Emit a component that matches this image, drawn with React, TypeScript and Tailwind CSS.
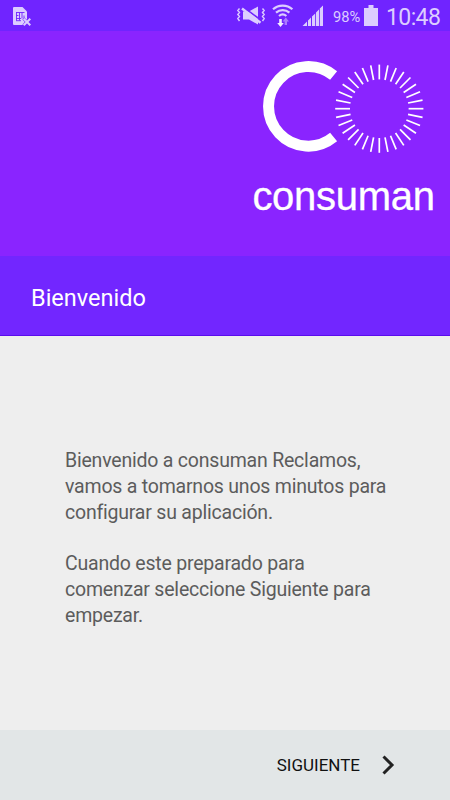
const TICKS = Array.from({ length: 32 }, (_, i) => i * 11.25);

function SimIcon() {
  return (
    <svg width="20" height="21" viewBox="12 6 20 21" fill="none">
      <path d="M14 7h8.500l4.500 4.500V19l-4 6h-9a1 1 0 0 1-1-1V8a1 1 0 0 1 1-1Z" fill="#dccdff" />
      <path d="M16 12.500h8.500M16 15.500h2.500M16 18.500h5M16 20.700h5M16.500 12.500v8M19.500 12.500v8M22 12.500v6M24 15.500v3" stroke="#7024ff" strokeWidth="0.900" />
      <path d="M23.400 18.600l7 7M30.400 18.600l-7 7" stroke="#7024ff" strokeWidth="2.800" />
      <path d="M23.700 18.700l6.600 6.600M30.300 18.700l-6.600 6.600" stroke="#dccdff" strokeWidth="2" />
    </svg>
  );
}

function MuteIcon() {
  return (
    <svg width="30" height="21" viewBox="236 5 30 21" fill="none">
      <path d="M243 11.500h6l9-5v18l-9-5h-6Z" fill="#dccdff" />
      <path d="M243 7l18.500 13.500" stroke="#7024ff" strokeWidth="1.600" />
      <path d="M242 8.500l18.500 14.300" stroke="#dccdff" strokeWidth="2.400" />
      <path
        d="M239.500 8.500l-1.700 2 1.700 2-1.700 2 1.700 2-1.700 2 1.700 2.500M262.500 8.500l1.700 2-1.700 2 1.700 2-1.700 2 1.700 2-1.700 2.500"
        stroke="#dccdff"
        strokeWidth="1.400"
      />
    </svg>
  );
}

function WifiIcon() {
  return (
    <svg width="22" height="24" viewBox="272 4 22 24" fill="none">
      <path d="M273 9.300a14.500 14.500 0 0 1 19.400 0M276 12.700a10.200 10.200 0 0 1 13.400 0M279 16a5.800 5.800 0 0 1 7.400 0" stroke="#dccdff" strokeWidth="2.200" />
      <path d="M279.200 19h2.600v4h2l-3.300 4-3.300-4h2Z" fill="#f3edff" />
      <path d="M284.600 25h2.400v-3.500h2l-3.200-4-3.200 4h2Z" fill="#aa7cff" />
    </svg>
  );
}

function SignalIcon() {
  return (
    <svg width="21" height="21" viewBox="302 5 21 21" fill="#dccdff">
      <path d="M302.500 26l4.500-4.500V26ZM308 26v-5.500l3-3V26ZM312 26v-9.500l3.200-3V26ZM316 26V12.500l3-3V26ZM319.800 26V8.500l3.200-3V26Z" />
    </svg>
  );
}

function StatusBar() {
  return (
    <div className="flex h-[31px] items-start bg-[#7024ff] pl-3 text-[#dccdff]">
      <div className="pt-1.5">
        <SimIcon />
      </div>
      <div className="ml-[204px] pt-[5px]">
        <MuteIcon />
      </div>
      <div className="ml-1.5 pt-1">
        <WifiIcon />
      </div>
      <div className="ml-2 pt-[5px]">
        <SignalIcon />
      </div>
      <span className="ml-2.5 w-[30px] pt-[7px] text-[14.7px] leading-5 whitespace-nowrap">98%</span>
      <svg className="mt-[5px] ml-px" width="14" height="21" viewBox="0 0 14 21" fill="#dccdff">
        <path d="M4.500 0h5v3H14v18H0V3h4.500Z" />
      </svg>
      <span className="ml-2 pt-1 text-[23px] leading-7 tracking-[-0.6px] whitespace-nowrap">10:48</span>
    </div>
  );
}

function Logo() {
  return (
    <svg width="190" height="170" viewBox="250 55 190 170" fill="none">
      <path d="M333.600 75.600A39.800 39.800 0 1 0 333.600 137.100" stroke="#fff" strokeWidth="11" />
      <g stroke="#fff" strokeWidth="1.700">
        {TICKS.map((angle) => (
          <path key={angle} d="M379.300 64.600v14.800" transform={`rotate(${angle} 379.300 108.700)`} />
        ))}
      </g>
      <text
        x="252.400"
        y="210"
        textLength="182.600"
        stroke="#fff"
        strokeWidth="0.300"
        className="fill-white font-['Liberation_Sans',sans-serif] text-[40px]"
      >
        consuman
      </text>
    </svg>
  );
}

export default function App() {
  return (
    <div className="flex h-[800px] w-[450px] flex-col overflow-hidden bg-[#eeeeee] font-[Roboto,sans-serif]">
      <StatusBar />
      <header className="flex h-[225px] justify-end bg-[#8a24ff] pt-6 pr-2.5">
        <Logo />
      </header>
      <div className="flex h-20 items-center border-b border-[#5a0cec] bg-[#7226ff] pt-1.5 pl-[31px]">
        <h1 className="text-[23.5px] text-white">Bienvenido</h1>
      </div>
      <main className="flex-1 pt-[112px] pl-[65px] text-[19.5px] leading-[25.8px] tracking-[-0.21px] text-[#5c5c5c]">
        <p>
          Bienvenido a consuman Reclamos,
          <br />
          vamos a tomarnos unos minutos para
          <br />
          configurar su aplicación.
        </p>
        <p className="mt-[25.8px]">
          Cuando este preparado para
          <br />
          comenzar seleccione Siguiente para
          <br />
          empezar.
        </p>
      </main>
      <footer className="flex h-[70px] items-center justify-end bg-[#e2e6e7] pr-[54px]">
        <button className="flex items-center text-[17px] text-[#111]">
          <span className="pt-0.5">SIGUIENTE</span>
          <svg className="ml-[21px]" width="15" height="22" viewBox="0 0 15 22" fill="none">
            <path d="M2.500 2.500l8.500 8.500-8.500 8.500" stroke="#222" strokeWidth="3" />
          </svg>
        </button>
      </footer>
    </div>
  );
}
